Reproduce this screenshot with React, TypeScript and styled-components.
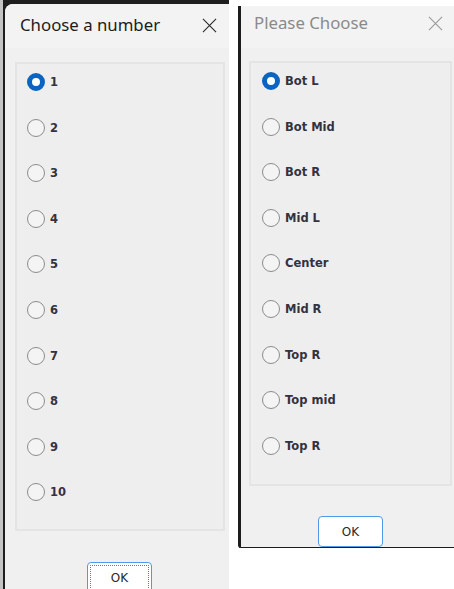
import React from "react";
import styled, { createGlobalStyle } from "styled-components";

const Global = createGlobalStyle`
  html, body { margin: 0; padding: 0; background: #ffffff; }
  body { width: 454px; height: 589px; overflow: hidden; }
`;

const Page = styled.div`
  display: flex;
  align-items: flex-start;
  width: 454px;
  height: 589px;
  overflow: hidden;
`;

const LeftShot = styled.div`
  width: 229px;
  height: 589px;
  flex: none;
  display: flex;
  background: #1e1e1e;
  border-left: 3px solid #c4c4c4;
  box-sizing: border-box;
  padding: 4px 0 0 2px;
`;

const RightShot = styled.div`
  margin-left: 9px;
  margin-top: 6px;
  width: 216px;
  height: 542px;
  flex: none;
  display: flex;
  border-left: 3px solid #1c1c1c;
  border-bottom: 1px solid #1c1c1c;
  border-bottom-left-radius: 3px;
  box-sizing: border-box;
`;

const Window = styled.div<{ $rounded?: boolean }>`
  flex: 1;
  display: flex;
  flex-direction: column;
  background: #f0f0f0;
  border-top-left-radius: ${(p) => (p.$rounded ? "8px" : "0")};
  overflow: hidden;
`;

const TitleBar = styled.div<{ $h: number; $pt: number }>`
  height: ${(p) => p.$h}px;
  box-sizing: border-box;
  padding-top: ${(p) => p.$pt}px;
  flex: none;
  display: flex;
  align-items: flex-start;
  justify-content: space-between;
  background: #f3f3f3;
`;

const Title = styled.span<{ $inactive?: boolean; $pl: number }>`
  padding-left: ${(p) => p.$pl}px;
  font-family: "Noto Sans", "Open Sans", sans-serif;
  font-size: 16.8px;
  line-height: 24px;
  color: ${(p) => (p.$inactive ? "#8a8a8a" : "#1c1c1c")};
`;

const CloseBtn = styled.span<{ $inactive?: boolean; $pr: number }>`
  display: flex;
  align-items: center;
  height: 24px;
  padding-right: ${(p) => p.$pr}px;
  color: ${(p) => (p.$inactive ? "#9a9a9a" : "#2a2a2a")};
`;

const Body = styled.div<{ $pt: number; $pl: number; $pr: number }>`
  flex: 1;
  display: flex;
  flex-direction: column;
  padding: ${(p) => p.$pt}px ${(p) => p.$pr}px 0 ${(p) => p.$pl}px;
`;

const Group = styled.div<{ $h: number; $pl: number }>`
  height: ${(p) => p.$h}px;
  box-sizing: border-box;
  border: 2px solid #e4e4e4;
  background: #eeeeee;
  display: flex;
  flex-direction: column;
  padding-top: 9px;
  padding-left: ${(p) => p.$pl}px;
`;

const Option = styled.label`
  height: 45.6px;
  flex: none;
  display: flex;
  align-items: flex-start;
  gap: 5px;
  font-family: "DejaVu Sans", sans-serif;
  font-weight: bold;
  font-size: 11.5px;
  color: #34323f;
`;

const RadioDot = styled.span<{ $on?: boolean }>`
  width: 18px;
  height: 18px;
  box-sizing: border-box;
  border-radius: 50%;
  flex: none;
  background: ${(p) => (p.$on ? "#ffffff" : "#f4f4f4")};
  border: ${(p) => (p.$on ? "5px solid #0a64c0" : "1.5px solid #8c8c8c")};
`;

const OptionText = styled.span`
  line-height: 18px;
`;

const ButtonRow = styled.div<{ $mt: number; $ml: number }>`
  display: flex;
  margin-top: ${(p) => p.$mt}px;
  margin-left: ${(p) => p.$ml}px;
`;

const OkButton = styled.button<{ $focused?: boolean }>`
  width: 65px;
  height: 31px;
  box-sizing: border-box;
  border: 1.5px solid #4d9be6;
  border-radius: 4px;
  background: #ffffff;
  font-family: "DejaVu Sans", sans-serif;
  font-size: 12px;
  color: #2a2a2a;
  outline: ${(p) => (p.$focused ? "1px dotted #777" : "none")};
  outline-offset: -4px;
  padding: 0;
`;

const CloseIcon = ({ size }: { size: number }) => (
  <svg width={size} height={size} viewBox="0 0 16 16" fill="none">
    <path d="M1 1 L15 15 M15 1 L1 15" stroke="currentColor" strokeWidth="1.2" />
  </svg>
);

const numbers = ["1", "2", "3", "4", "5", "6", "7", "8", "9", "10"];
const places = ["Bot L", "Bot Mid", "Bot R", "Mid L", "Center", "Mid R", "Top R", "Top mid", "Top R"];

const OptionList = ({ options }: { options: string[] }) => (
  <>
    {options.map((o, i) => (
      <Option key={i}>
        <RadioDot $on={i === 0} />
        <OptionText>{o}</OptionText>
      </Option>
    ))}
  </>
);

export default function App() {
  return (
    <>
      <Global />
      <Page>
        <LeftShot>
          <Window $rounded>
            <TitleBar $h={44} $pt={9}>
              <Title $pl={15}>Choose a number</Title>
              <CloseBtn $pr={12}>
                <CloseIcon size={15} />
              </CloseBtn>
            </TitleBar>
            <Body $pt={14} $pl={10} $pr={4}>
              <Group $h={469} $pl={10}>
                <OptionList options={numbers} />
              </Group>
              <ButtonRow $mt={31} $ml={72}>
                <OkButton $focused>OK</OkButton>
              </ButtonRow>
            </Body>
          </Window>
        </LeftShot>
        <RightShot>
          <Window>
            <TitleBar $h={42} $pt={5}>
              <Title $pl={13} $inactive>Please Choose</Title>
              <CloseBtn $pr={11} $inactive>
                <CloseIcon size={15} />
              </CloseBtn>
            </TitleBar>
            <Body $pt={13} $pl={8} $pr={2}>
              <Group $h={425} $pl={11}>
                <OptionList options={places} />
              </Group>
              <ButtonRow $mt={30} $ml={69}>
                <OkButton>OK</OkButton>
              </ButtonRow>
            </Body>
          </Window>
        </RightShot>
      </Page>
    </>
  );
}
